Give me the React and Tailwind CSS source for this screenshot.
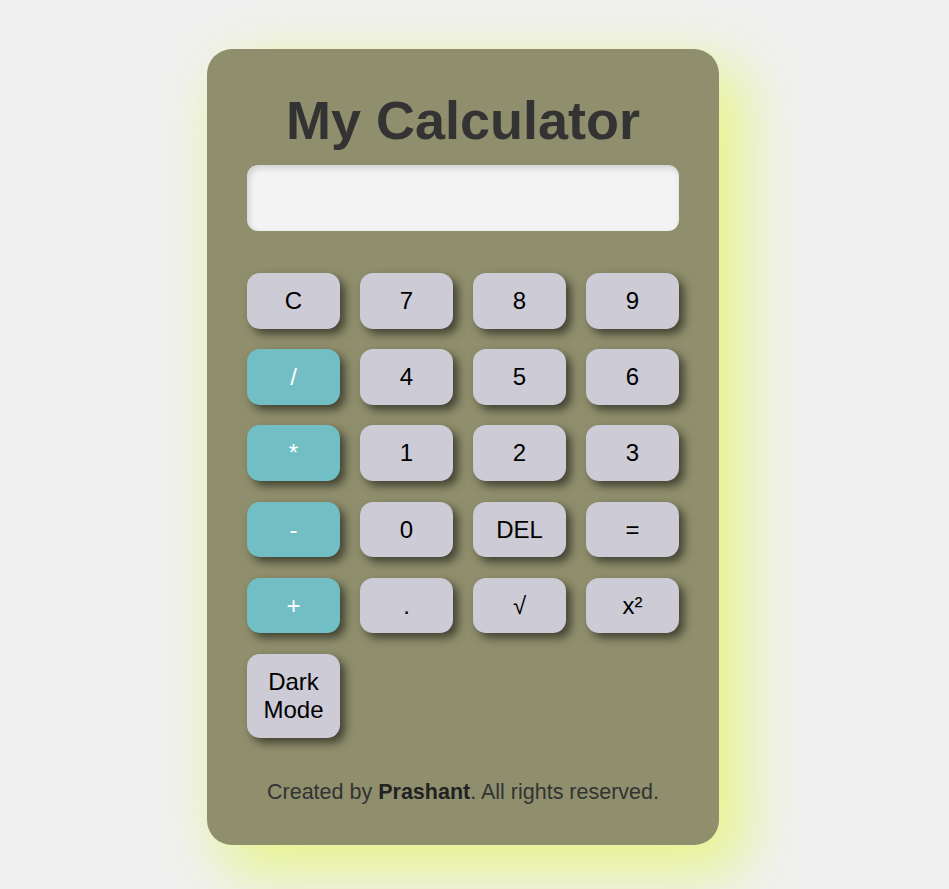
const keys = [
  { label: 'C' },
  { label: '7' },
  { label: '8' },
  { label: '9' },
  { label: '/', op: true },
  { label: '4' },
  { label: '5' },
  { label: '6' },
  { label: '*', op: true },
  { label: '1' },
  { label: '2' },
  { label: '3' },
  { label: '-', op: true },
  { label: '0' },
  { label: 'DEL' },
  { label: '=' },
  { label: '+', op: true },
  { label: '.' },
  { label: '√' },
  { label: 'x²' },
];

const Key = ({ label, op }) => (
  <button
    className={
      'rounded-[13px] px-2 py-[14px] text-[24px] leading-[27.6px] shadow-[5px_5px_10px_rgba(0,0,0,0.55)] ' +
      (op ? 'bg-[#71bfc5] text-white' : 'bg-[#cccbd6] text-black')
    }
  >
    {label}
  </button>
);

export default function App() {
  return (
    <div
      className="min-h-[889px] bg-[#f0f0f0] pt-[49px] pb-10"
      style={{ fontFamily: '"Liberation Sans", Arial, sans-serif' }}
    >
      <div className="ml-[207px] flex w-[512px] flex-col rounded-[25px] bg-[#8f8f6d] px-10 py-10 shadow-[20px_22px_60px_6px_#e6f58a]">
        <h1 className="text-center text-[54px] font-bold leading-[62px] text-[#333333]">My Calculator</h1>

        {/* Display */}
        <div className="mt-[14px] h-[66px] rounded-[11px] bg-[#f3f3f3] shadow-[inset_2px_3px_6px_rgba(0,0,0,0.15)]"></div>

        {/* Keypad */}
        <div className="mt-[42px] grid grid-cols-4 gap-x-5 gap-y-[20.6px]">
          {keys.map((k) => (
            <Key key={k.label} label={k.label} op={k.op} />
          ))}
          <button className="rounded-[13px] bg-[#cccbd6] px-2 py-[14px] text-[24px] leading-[28px] text-black shadow-[5px_5px_10px_rgba(0,0,0,0.55)]">
            Dark
            <br />
            Mode
          </button>
        </div>

        <p className="mt-[42px] text-center text-[21.5px] leading-[24.7px] text-[#333333]">
          Created by <span className="font-bold text-[#222222]">Prashant</span>. All rights reserved.
        </p>
      </div>
    </div>
  );
}
